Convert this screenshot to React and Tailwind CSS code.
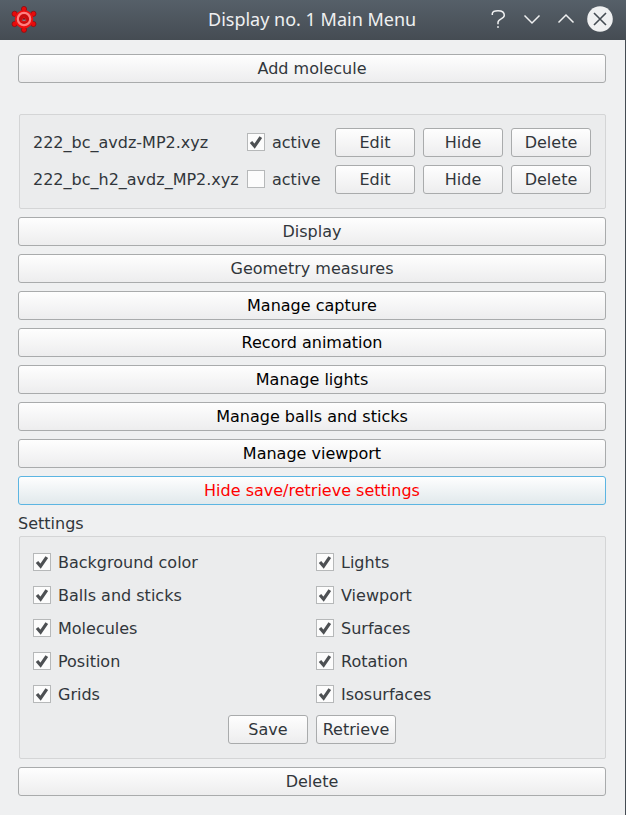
import React from "react";

function PushButton({ children, tone = "text-[#31363b]", active = false, className = "w-full" }) {
  const skin = active
    ? "border-[#5cb5e2] from-[#fefefe] to-[#e1e9ec]"
    : "border-[#a9abac] from-[#fefefe] to-[#ededee]";
  return (
    <button
      className={`flex h-[29px] shrink-0 items-center justify-center rounded-[3px] border bg-linear-to-b leading-[19px] ${skin} ${tone} ${className}`}
    >
      {children}
    </button>
  );
}

function CheckBox({ label, checked = true }) {
  return (
    <label className="flex items-start gap-[7px]">
      <span className="block size-[18px] shrink-0 border border-[#b6b8b9] bg-[#fcfcfc]">
        {checked && (
          <svg viewBox="0 0 16 16" className="block size-4" fill="none" stroke="#4d5053">
            <path d="M3 8 L6.6 12.2 L12.8 3.2" strokeWidth="3.2" />
          </svg>
        )}
      </span>
      <span className="leading-[19px]">{label}</span>
    </label>
  );
}

function GearLogo() {
  return (
    <svg viewBox="0 0 26 28" className="h-7 w-[26px]">
      <g fill="#e80a0a" stroke="#8c0c10" strokeWidth="0.8">
        <circle cx="13" cy="4" r="2.6" />
        <circle cx="22.4" cy="8.8" r="2.6" />
        <circle cx="22.4" cy="19" r="2.6" />
        <circle cx="13" cy="24.8" r="2.6" />
        <circle cx="3.6" cy="19" r="2.6" />
        <circle cx="3.6" cy="8.8" r="2.6" />
      </g>
      <circle cx="13" cy="14.2" r="9.2" fill="#ee1010" />
      <circle cx="13" cy="14" r="6.2" fill="#c80d0d" stroke="#ff8080" strokeWidth="2.2" />
      <path d="M10 16.6 L13 11.6 L16 16.6 Z" fill="#64181e" stroke="#e81515" strokeWidth="0.9" />
      <path d="M11.4 15.2h3.2" stroke="#9a9ca2" strokeWidth="1.1" />
    </svg>
  );
}

function TitleBar() {
  return (
    <header className="flex h-10 shrink-0 items-center bg-linear-to-b from-[#566069] to-[#454c53] pl-[11px] text-[#eff0f1]">
      <div className="flex w-[197px] items-center pb-[2px]">
        <GearLogo />
      </div>
      <h1 className="w-[279px] pb-[2px] font-['Noto_Sans',sans-serif] text-[18px] leading-6 whitespace-nowrap">
        Display no. 1 Main Menu
      </h1>
      <svg viewBox="0 0 139 40" className="h-10 w-[139px]" fill="none" stroke="#eff0f1" strokeWidth="1.5">
        <path d="M5.3 15 V13.5 C5.5 11.8 7.5 10.7 11 10.7 C14.5 10.7 17.3 12 17.3 15.3 C17.3 19.2 11 18.7 11 22.5 V24.3" />
        <path d="M11 26.2 V27.8" strokeWidth="1.8" />
        <path d="M37.5 15.5 L45 23 L52.5 15.5" />
        <path d="M71.5 22.5 L79 15 L86.5 22.5" />
        <circle cx="113" cy="19" r="12.8" fill="#eff0f1" stroke="none" />
        <path d="M107 13 L119 25 M119 13 L107 25" stroke="#454c53" strokeWidth="1.6" />
      </svg>
    </header>
  );
}

function MoleculeRow({ name, checked }) {
  return (
    <div className="flex items-center">
      <span className="w-[214px] leading-[19px] whitespace-nowrap">{name}</span>
      <div className="w-[88px]">
        <CheckBox label="active" checked={checked} />
      </div>
      <div className="flex gap-2">
        <PushButton className="w-20">Edit</PushButton>
        <PushButton className="w-20">Hide</PushButton>
        <PushButton className="w-20">Delete</PushButton>
      </div>
    </div>
  );
}

const settings = [
  "Background color", "Lights",
  "Balls and sticks", "Viewport",
  "Molecules", "Surfaces",
  "Position", "Rotation",
  "Grids", "Isosurfaces",
];

export default function App() {
  return (
    <div className="flex h-[815px] w-[626px] flex-col overflow-hidden bg-[#eff0f1] font-['DejaVu_Sans',sans-serif] text-[16px] text-[#31363b]">
      <TitleBar />
      <main className="flex flex-1 flex-col border-r border-[#454c53] pt-[14px] pr-[19px] pl-[18px]">
        <PushButton>Add molecule</PushButton>
        <section className="mt-[31px] ml-px flex h-[95px] shrink-0 flex-col gap-2 rounded-[2px] border border-[#d4d5d6] bg-[#ebeced] pt-[13px] pl-[13px]">
          <MoleculeRow name="222_bc_avdz-MP2.xyz" checked />
          <MoleculeRow name="222_bc_h2_avdz_MP2.xyz" checked={false} />
        </section>
        <nav className="mt-2 flex flex-col gap-2">
          <PushButton>Display</PushButton>
          <PushButton>Geometry measures</PushButton>
          <PushButton tone="text-black">Manage capture</PushButton>
          <PushButton tone="text-black">Record animation</PushButton>
          <PushButton tone="text-black">Manage lights</PushButton>
          <PushButton tone="text-black">Manage balls and sticks</PushButton>
          <PushButton tone="text-black">Manage viewport</PushButton>
          <PushButton tone="text-[#ff0000]" active>Hide save/retrieve settings</PushButton>
        </nav>
        <h2 className="mt-[9px] leading-[19px]">Settings</h2>
        <section className="mt-[3px] mb-2 ml-px flex h-[223px] shrink-0 flex-col rounded-[2px] border border-[#d4d5d6] bg-[#ebeced] pt-[16px] pl-[13px]">
          <div className="grid grid-cols-[283px_1fr] gap-y-[14px]">
            {settings.map((s) => (
              <CheckBox key={s} label={s} />
            ))}
          </div>
          <div className="mt-[11px] ml-[195px] flex gap-2">
            <PushButton className="w-20">Save</PushButton>
            <PushButton className="w-20">Retrieve</PushButton>
          </div>
        </section>
        <PushButton>Delete</PushButton>
      </main>
    </div>
  );
}
